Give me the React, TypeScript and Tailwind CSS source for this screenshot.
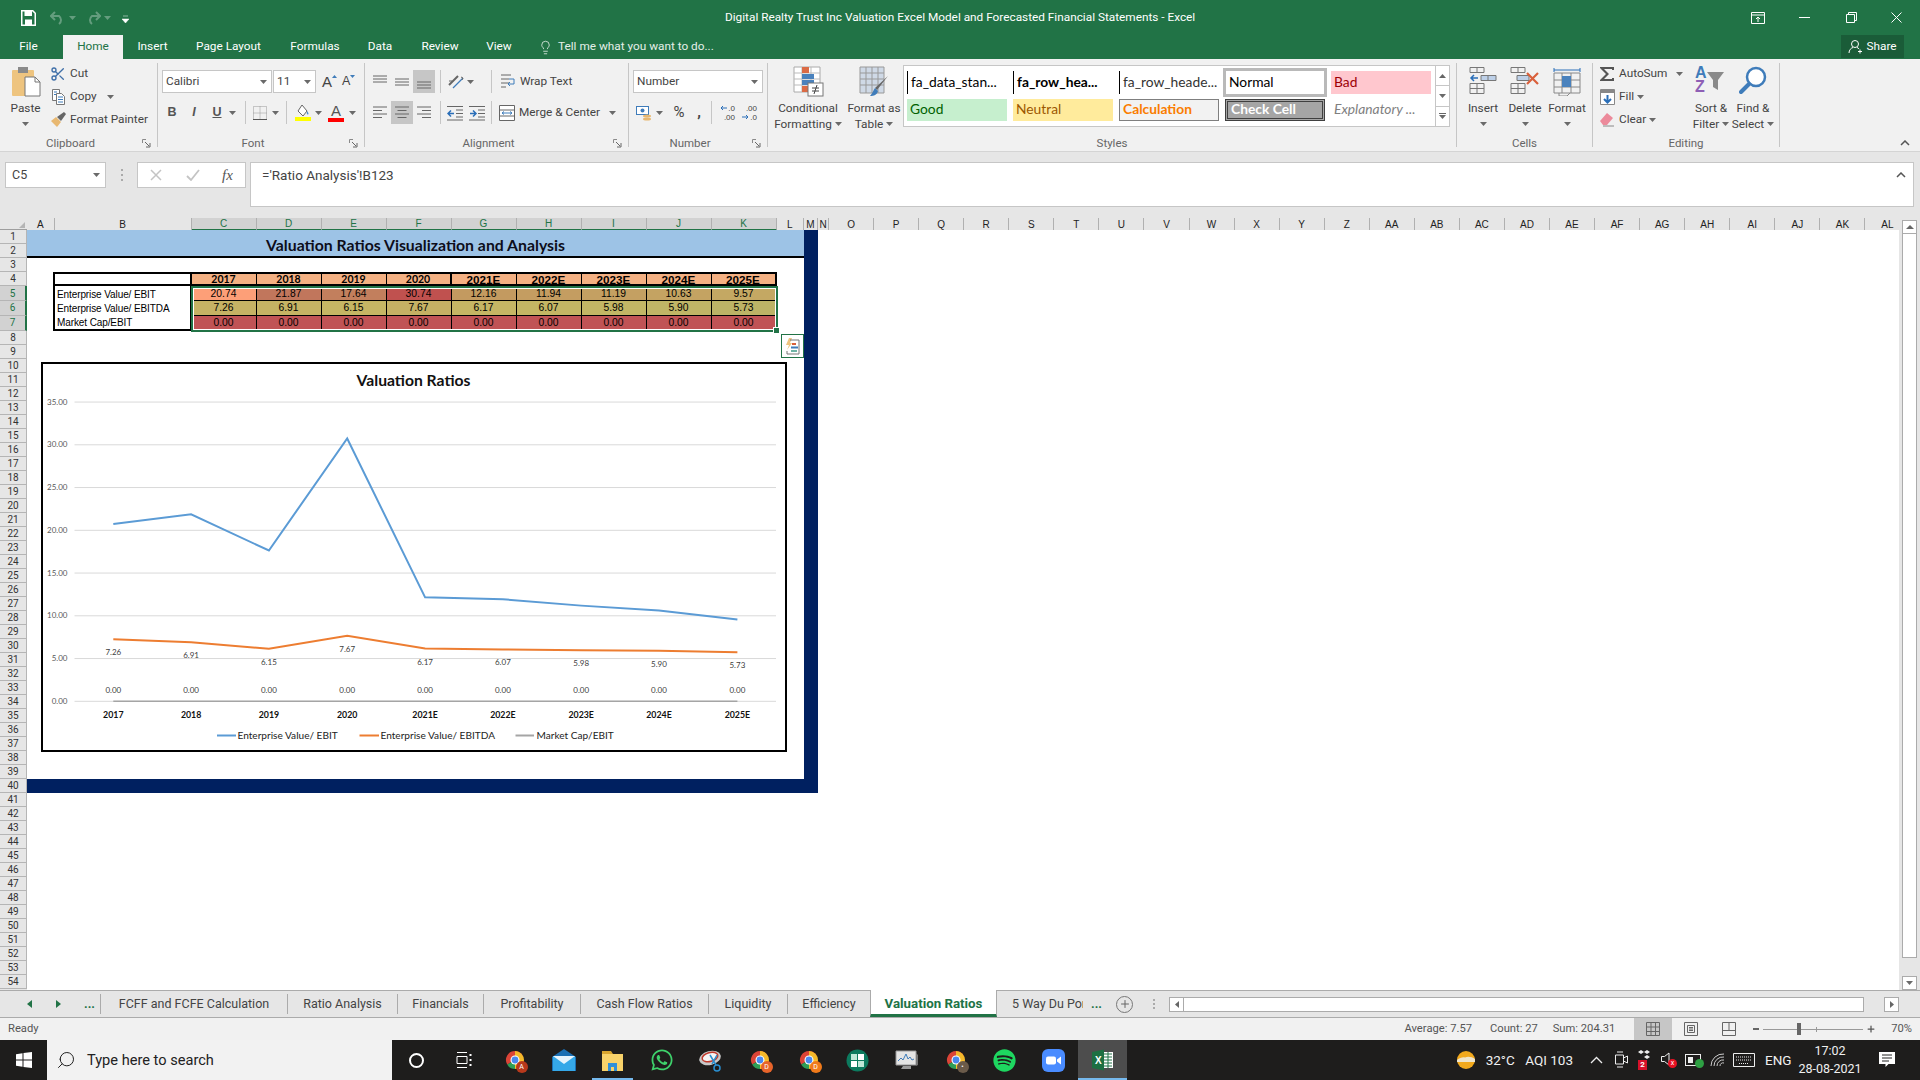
import React from 'react';
import { Scissors, Lightbulb, Search, Plus } from 'lucide-react';
import { FaWhatsapp, FaSpotify } from 'react-icons/fa';

const CELL_COLS = 'grid-cols-[27.5px_137px_repeat(9,65px)_27.5px_14px_11px_repeat(24,45.07px)]';
const CELL_ROWS = 'grid-rows-[repeat(4,14.07px)_repeat(3,14.8px)_repeat(47,14.03px)]';

const columns = ['A','B','C','D','E','F','G','H','I','J','K','L','M','N','O','P','Q','R','S','T','U','V','W','X','Y','Z','AA','AB','AC','AD','AE','AF','AG','AH','AI','AJ','AK','AL'];
const selectedCols = ['C','D','E','F','G','H','I','J','K'];
const rows = Array.from({ length: 54 }, (_, i) => i + 1);

const years = ['2017','2018','2019','2020','2021E','2022E','2023E','2024E','2025E'];
const tableRows = [
  { label: 'Enterprise Value/ EBIT', values: ['20.74','21.87','17.64','30.74','12.16','11.94','11.19','10.63','9.57'], colors: ['bg-[#fd9f78]','bg-[#c1765c]','bg-[#c27f5d]','bg-[#c0514f]','bg-[#c39a60]','bg-[#c49d61]','bg-[#c4a062]','bg-[#c4a362]','bg-[#c4a863]'] },
  { label: 'Enterprise Value/ EBITDA', values: ['7.26','6.91','6.15','7.67','6.17','6.07','5.98','5.90','5.73'], colors: ['bg-[#c5b264]','bg-[#c5b364]','bg-[#c5b664]','bg-[#c5b164]','bg-[#c5b664]','bg-[#c4b664]','bg-[#c2b665]','bg-[#c0b566]','bg-[#bcb366]'] },
  { label: 'Market Cap/EBIT', values: ['0.00','0.00','0.00','0.00','0.00','0.00','0.00','0.00','0.00'], colors: Array(9).fill('bg-[#c05355]') },
];

const chartX = [112.8, 190.6, 268.4, 346.7, 424.6, 502.4, 580.7, 658.5, 736.9];
const ebit = [20.74, 21.87, 17.64, 30.74, 12.16, 11.94, 11.19, 10.63, 9.57];
const ebitda = [7.26, 6.91, 6.15, 7.67, 6.17, 6.07, 5.98, 5.9, 5.73];
const ebitdaLabelY = [654.5, 657.5, 664.5, 651.5, 664.5, 664.5, 665.5, 666.5, 667.5];
const toY = (v: number) => 701.3 - v * 8.55;
const toPoints = (vals: number[]) => vals.map((v, i) => `${chartX[i]},${toY(v)}`).join(' ');

const Caret = ({ color = '#6a6a6a' }: { color?: string }) => (
  <svg width="7" height="4" viewBox="0 0 7 4" className="shrink-0"><path d="M0 0h7L3.5 4z" fill={color} /></svg>
);

const Lines = ({ kind }: { kind: 'top' | 'mid' | 'bot' | 'left' | 'center' | 'right' }) => {
  const d: Record<string, string> = {
    top: 'M1 2h14M1 5h14M1 8h14',
    mid: 'M1 5h14M1 8h14M1 11h14',
    bot: 'M1 8h14M1 11h14M1 14h14',
    left: 'M1 2h14M1 5.5h9M1 9h14M1 12.5h9',
    center: 'M1 2h14M3.5 5.5h9M1 9h14M3.5 12.5h9',
    right: 'M1 2h14M6 5.5h9M1 9h14M6 12.5h9',
  };
  return <svg width="16" height="16" viewBox="0 0 16 16"><path d={d[kind]} stroke="#666" strokeWidth="1" fill="none" /></svg>;
};

const Sep = ({ className = '' }: { className?: string }) => <div className={`w-px h-[23px] bg-[#c6c6c6] shrink-0 ${className}`} />;

const Launcher = () => (
  <svg width="9" height="9" viewBox="0 0 9 9" className="justify-self-end mr-[6px]"><path d="M.5 4V.5H4" stroke="#8a8a8a" fill="none" /><path d="M3 3l4 4M8 4v4H4" stroke="#666" fill="none" /></svg>
);

const Group = ({ label, width, launcher, children }: { label: string; width: string; launcher?: boolean; children: React.ReactNode }) => (
  <div className={`flex flex-col h-[84px] mt-[4px] border-r border-[#c6c6c6] shrink-0 ${width}`}>
    <div className="flex-1 flex min-h-0">{children}</div>
    <div className={`grid items-center h-[13px] text-[11.5px] leading-[13px] text-[#666] translate-y-[3px] ${launcher ? 'grid-cols-[1fr_auto_1fr_16px]' : 'grid-cols-[1fr_auto_1fr]'}`}>
      <span />
      <span>{label}</span>
      <span />
      {launcher && <Launcher />}
    </div>
  </div>
);

const BigButton = ({ icon, lines, width, caretBelow }: { icon: React.ReactNode; lines: string[]; width: string; caretBelow?: boolean }) => (
  <div className={`flex flex-col items-center shrink-0 ${width}`}>
    <div className="h-[37px] pt-[3px] flex justify-center">{icon}</div>
    {lines.map((l, i) => (
      <div key={l} className="h-[16px] leading-[16px] flex items-center gap-[3px] whitespace-nowrap">
        {l}
        {!caretBelow && i === lines.length - 1 && lines.length > 1 && <Caret />}
      </div>
    ))}
    {caretBelow && <div className="h-[16px] flex items-center"><Caret /></div>}
  </div>
);

const SmallRow = ({ icon, text, caret }: { icon: React.ReactNode; text: string; caret?: string }) => (
  <div className="h-[23px] flex items-center whitespace-nowrap">
    <div className="w-[18px] flex justify-center shrink-0">{icon}</div>
    <span className="ml-[3px]">{text}</span>
    {caret && <span className={caret}><Caret /></span>}
  </div>
);

const PasteIcon = () => (
  <svg width="30" height="31" viewBox="0 0 30 31">
    <rect x="1" y="4" width="22" height="26" rx="1" fill="#eec47f" />
    <rect x="7" y="1" width="10" height="6" fill="#8a8a8a" />
    <path d="M14 11h10l5 5v14H14z" fill="#fff" stroke="#777" />
    <path d="M24 11v5h5" fill="none" stroke="#777" />
  </svg>
);
const CopyIcon = () => (
  <svg width="15" height="16" viewBox="0 0 15 16" fill="#fff" stroke="#777">
    <path d="M1.5.5h7v11h-7z" />
    <path d="M5.5 4.5h5l3 3v8h-8z" />
    <path d="M7 8h5M7 10.5h5M7 13h5M3 3h3M3 5.5h2" stroke="#3f7cba" />
  </svg>
);
const PainterIcon = () => (
  <svg width="17" height="17" viewBox="0 0 17 17">
    <path d="M1 10l5-4 5 5-4 5z" fill="#e8b871" />
    <path d="M7 6l4 4 5-7-2-2z" fill="#666" />
  </svg>
);
const BordersIcon = () => (
  <svg width="14" height="14" viewBox="0 0 14 14"><path d="M.5.5h13v13H.5zM7 .5v13M.5 7h13" stroke="#999" strokeDasharray="1 1" fill="none" /><path d="M0 13.5h14" stroke="#555" /></svg>
);
const FillIcon = () => (
  <svg width="16" height="17" viewBox="0 0 16 17">
    <path d="M7 1l5 6-4 5-5-5z" fill="#fff" stroke="#666" />
    <path d="M12 7c1.5 2 2 3 1 3.500s-1.500-1-1-3.500z" fill="#4a90d0" />
    <rect y="13" width="16" height="4" fill="#ffff00" />
  </svg>
);
const FontColorIcon = () => (
  <div className="flex flex-col items-center w-[16px]">
    <span className="text-[15px] leading-[14px] font-['Liberation_Sans',sans-serif] text-[#555]">A</span>
    <div className="w-[16px] h-[4px] bg-[#ff0000]" />
  </div>
);
const OrientationIcon = () => (
  <svg width="18" height="18" viewBox="0 0 18 18"><path d="M2 12L11 3" stroke="#666" strokeWidth="2" /><path d="M6 15L16 5" stroke="#3f7cba" strokeWidth="1.200" /><path d="M14 4l2 1-1 2M2 8h3" stroke="#666" fill="none" /></svg>
);
const WrapIcon = () => (
  <svg width="16" height="18" viewBox="0 0 16 18"><path d="M1 2h10M1 6h8M1 10h8M1 14h5" stroke="#666" fill="none" /><path d="M9 6h5v5H8m2-2l-2 2 2 2" stroke="#3f7cba" fill="none" /></svg>
);
const MergeIcon = () => (
  <svg width="16" height="16" viewBox="0 0 16 16"><path d="M.5.500h15v15H.5zM.5 5h15M.5 11h15" stroke="#666" fill="#fff" /><path d="M3 8h10M3 8l2-1.500M3 8l2 1.500M13 8l-2-1.500M13 8l-2 1.500" stroke="#3f7cba" fill="none" /></svg>
);
const IndentIcon = ({ out }: { out?: boolean }) => (
  <svg width="16" height="16" viewBox="0 0 16 16"><path d="M0 1.500h16M9 5h7M9 8.500h7M9 12h7M0 15h16" stroke="#666" fill="none" /><path d={out ? 'M7 8.500H1m3-3l-3 3 3 3' : 'M1 8.500h6m-3-3l3 3-3 3'} stroke="#2a6eb8" strokeWidth="1.500" fill="none" /></svg>
);
const AccountingIcon = () => (
  <svg width="16" height="18" viewBox="0 0 16 18"><rect x=".5" y="2.500" width="12" height="8" fill="#fff" stroke="#3f7cba" /><circle cx="6.500" cy="6.500" r="2" fill="#3f7cba" /><ellipse cx="11" cy="12" rx="4" ry="1.500" fill="#e8b871" /><ellipse cx="11" cy="15" rx="4" ry="1.500" fill="#e8b871" /></svg>
);
const DecimalIcon = ({ more }: { more?: boolean }) => (
  <div className="w-[16px] flex flex-col text-[8px] leading-[9px] font-['Liberation_Sans',sans-serif] text-[#444] whitespace-nowrap">
    <span className="flex items-center justify-end gap-px">
      {more && <svg width="7" height="6" viewBox="0 0 7 6"><path d="M7 3H1m2-2L1 3l2 2" stroke="#2a6eb8" fill="none" /></svg>}
      {more ? '.0' : '.00'}
    </span>
    <span className="flex items-center justify-end gap-px">
      {!more && <svg width="7" height="6" viewBox="0 0 7 6"><path d="M0 3h6M4 1l2 2-2 2" stroke="#2a6eb8" fill="none" /></svg>}
      {more ? '.00' : '.0'}
    </span>
  </div>
);
const CondFormatIcon = () => (
  <svg width="31" height="31" viewBox="0 0 31 31">
    <path d="M1 1h26v25H1z" fill="#fff" stroke="#aaa" />
    <path d="M1 7h26M1 13h26M1 19h26M9 1v25M18 1v25" stroke="#bbb" />
    <rect x="9" y="1" width="7" height="6" fill="#db6b45" />
    <rect x="9" y="8" width="12" height="5" fill="#4a82bd" />
    <rect x="9" y="14" width="12" height="5" fill="#4a82bd" />
    <rect x="9" y="20" width="7" height="6" fill="#db6b45" />
    <rect x="15" y="17" width="15" height="13" fill="#fff" stroke="#777" />
    <path d="M19 22h7M19 25h7M24 19l-3 9" stroke="#444" />
  </svg>
);
const TableIcon = () => (
  <svg width="30" height="31" viewBox="0 0 30 31">
    <path d="M1 1h24v26H1z" fill="#cfd9e6" stroke="#999" />
    <path d="M1 7h24M1 13h24M1 19h24M7 1v26M13 1v26M19 1v26" stroke="#999" />
    <path d="M29 10L18 24l-2-2z" fill="#666" />
    <path d="M16 22l3 3c-1 4-4 5-8 5 2-2 3-5 5-8z" fill="#3f7cba" />
  </svg>
);
const InsertIcon = () => (
  <svg width="28" height="28" viewBox="0 0 28 28" fill="none">
    <path d="M1 1.500h14v5H1zM8 1.500v5M1 17.500h14v10H1zM1 22.500h14M8 17.500v10" stroke="#777" />
    <path d="M12 9.500h15v5H12zM19 9.500v5" fill="#bdd0e8" stroke="#777" />
    <path d="M9 12H2m3-3l-3 3 3 3" stroke="#2a6eb8" strokeWidth="1.500" />
  </svg>
);
const DeleteIcon = () => (
  <svg width="30" height="28" viewBox="0 0 30 28" fill="none">
    <path d="M1 1.500h14v5H1zM8 1.500v5M1 17.500h14v10H1zM1 22.500h14M8 17.500v10" stroke="#777" />
    <path d="M7 9.500h12v5H7z" fill="#bdd0e8" stroke="#777" />
    <path d="M17 7l11 11M28 7L17 18" stroke="#d9603b" strokeWidth="2.200" />
  </svg>
);
const FormatIcon = () => (
  <svg width="28" height="30" viewBox="0 0 28 30" fill="none">
    <path d="M1 2v4M27 2v4M1 4h26" stroke="#2a6eb8" />
    <path d="M1 7h26v20H1zM1 14h26M1 21h26M9 7v20M18 7v20" stroke="#888" />
    <rect x="9" y="10" width="9" height="11" fill="#4a82bd" />
    <path d="M6 27v3h8l3-3" stroke="#888" />
  </svg>
);
const SigmaIcon = () => (
  <svg width="16" height="16" viewBox="0 0 16 16"><path d="M1 1h14v3h-2V3H5l5 5-5 5h8v-1h2v3H1v-1l6-6-6-6z" fill="#555" /></svg>
);
const FillDownIcon = () => (
  <svg width="15" height="16" viewBox="0 0 15 16"><path d="M.500.500h14v15H.500z" fill="#fff" stroke="#888" /><rect x="1" y="1" width="13" height="3" fill="#888" /><path d="M7.500 6v7M4 10l3.500 3.500L11 10" stroke="#2a6eb8" strokeWidth="2" fill="none" /></svg>
);
const EraserIcon = () => (
  <svg width="16" height="15" viewBox="0 0 16 15"><path d="M1 9l7-8 6 5-6 7H4z" fill="#ec8a9b" /><path d="M4 14h11" stroke="#888" /></svg>
);
const SortIcon = () => (
  <div className="flex items-start w-[32px] h-[30px] font-['Liberation_Sans',sans-serif] font-bold text-[16px] leading-[14px]">
    <div className="flex flex-col">
      <span className="text-[#3f7cba]">A</span>
      <span className="text-[#8e5fb5]">Z</span>
    </div>
    <svg width="20" height="24" viewBox="0 0 20 24" className="mt-[5px] -ml-[1px]"><path d="M1 1h17l-6 8v10l-5-3V9z" fill="#8a8a8a" /></svg>
  </div>
);
const FindIcon = () => (
  <svg width="28" height="29" viewBox="0 0 28 29" fill="none"><circle cx="17" cy="11" r="9" stroke="#3f7cba" strokeWidth="2.500" fill="#fff" /><path d="M10 18L2 26" stroke="#3f7cba" strokeWidth="4" strokeLinecap="round" /></svg>
);

const StyleCell = ({ className, text }: { className: string; text: string }) => (
  <div className={`flex items-center pl-[3px] pb-px overflow-hidden whitespace-nowrap font-[Lato,sans-serif] text-[13.800px] ${className}`}>{text}</div>
);

const Ribbon = () => (
  <div className="flex h-[93px] bg-[#f1f1f1] border-b border-[#d4d4d4] text-[11.800px] text-[#444] shrink-0">
    <Group label="Clipboard" width="w-[158px]" launcher>
      <div className="w-[49px] pl-[2px] shrink-0"><BigButton icon={<PasteIcon />} lines={['Paste']} width="w-[47px]" caretBelow /></div>
      <div className="flex flex-col -mt-px">
        <SmallRow icon={<Scissors size={16} color="#3f6fa8" />} text="Cut" />
        <SmallRow icon={<CopyIcon />} text="Copy" caret="ml-[10px]" />
        <SmallRow icon={<PainterIcon />} text="Format Painter" />
      </div>
    </Group>

    <Group label="Font" width="w-[207px]" launcher>
      <div className="flex flex-col pt-[7px] pl-[4px] gap-[8px]">
        <div className="flex items-center h-[23px]">
          <div className="w-[110px] h-[23px] bg-white border border-[#c6c6c6] flex items-center justify-between pl-[3px] pr-[4px]">Calibri<Caret /></div>
          <div className="w-[43px] ml-px h-[23px] bg-white border border-[#c6c6c6] flex items-center justify-between pl-[3px] pr-[4px]">11<Caret /></div>
          <span className="ml-[6px] flex items-start font-['Liberation_Sans',sans-serif]">
            <span className="text-[15px] leading-[15px]">A</span>
            <svg width="5" height="3" viewBox="0 0 5 3" className="mt-px"><path d="M0 3h5L2.500 0z" fill="#3f7cba" /></svg>
          </span>
          <span className="ml-[5px] flex items-start font-['Liberation_Sans',sans-serif]">
            <span className="text-[12.500px] leading-[15px]">A</span>
            <svg width="5" height="3" viewBox="0 0 5 3" className="mt-px"><path d="M0 0h5L2.500 3z" fill="#3f7cba" /></svg>
          </span>
        </div>
        <div className="flex items-center h-[23px] font-['Liberation_Sans',sans-serif] text-[12.500px] text-[#555]">
          <span className="w-[20px] text-center font-bold">B</span>
          <span className="w-[20px] ml-[2px] text-center italic font-bold">I</span>
          <span className="w-[20px] ml-[3px] text-center font-bold underline">U</span>
          <span className="ml-[2px]"><Caret /></span>
          <Sep className="ml-[9px]" />
          <span className="ml-[7px]"><BordersIcon /></span>
          <span className="ml-[5px]"><Caret /></span>
          <Sep className="ml-[7px]" />
          <span className="ml-[8px]"><FillIcon /></span>
          <span className="ml-[4px]"><Caret /></span>
          <span className="ml-[6px]"><FontColorIcon /></span>
          <span className="ml-[5px]"><Caret /></span>
        </div>
      </div>
    </Group>

    <Group label="Alignment" width="w-[264px]" launcher>
      <div className="flex flex-col pt-[7px] pl-[4px] gap-[8px]">
        <div className="flex items-center h-[23px]">
          <div className="w-[22px] flex justify-center"><Lines kind="top" /></div>
          <div className="w-[22px] flex justify-center"><Lines kind="mid" /></div>
          <div className="w-[22px] h-[23px] bg-[#c6c6c6] flex items-center justify-center"><Lines kind="bot" /></div>
          <Sep className="ml-[5px]" />
          <span className="ml-[6px]"><OrientationIcon /></span>
          <span className="ml-[2px]"><Caret /></span>
          <Sep className="ml-[17px]" />
          <span className="ml-[8px] w-[16px]"><WrapIcon /></span>
          <span className="ml-[4px]">Wrap Text</span>
        </div>
        <div className="flex items-center h-[23px]">
          <div className="w-[22px] flex justify-center"><Lines kind="left" /></div>
          <div className="w-[22px] h-[23px] bg-[#c6c6c6] flex items-center justify-center"><Lines kind="center" /></div>
          <div className="w-[22px] flex justify-center"><Lines kind="right" /></div>
          <Sep className="ml-[5px]" />
          <span className="ml-[6px]"><IndentIcon out /></span>
          <span className="ml-[6px]"><IndentIcon /></span>
          <Sep className="ml-[6px]" />
          <span className="ml-[7px] w-[16px]"><MergeIcon /></span>
          <span className="ml-[4px]">Merge &amp; Center</span>
          <span className="ml-[9px]"><Caret /></span>
        </div>
      </div>
    </Group>

    <Group label="Number" width="w-[139px]" launcher>
      <div className="flex flex-col pt-[7px] pl-[4px] gap-[8px]">
        <div className="w-[130px] h-[23px] bg-white border border-[#c6c6c6] flex items-center justify-between pl-[3px] pr-[4px]">Number<Caret /></div>
        <div className="flex items-center h-[23px]">
          <span className="ml-[3px]"><AccountingIcon /></span>
          <span className="ml-[4px]"><Caret /></span>
          <span className="ml-[9px] w-[14px] text-[15px] text-center">%</span>
          <span className="ml-[9px] w-[8px] text-[15px] font-bold text-center">,</span>
          <Sep className="ml-[8px]" />
          <span className="ml-[7px]"><DecimalIcon more /></span>
          <span className="ml-[6px]"><DecimalIcon /></span>
        </div>
      </div>
    </Group>

    <Group label="Styles" width="w-[689px]">
      <div className="w-[3px] shrink-0" />
      <BigButton icon={<CondFormatIcon />} lines={['Conditional', 'Formatting']} width="w-[74px]" />
      <BigButton icon={<TableIcon />} lines={['Format as', 'Table']} width="w-[58px]" />
      <div className="flex mt-[2px] h-[62px] w-[547px] bg-white border border-[#c6c6c6] shrink-0">
        <div className="grid grid-cols-[repeat(5,100px)] grid-rows-[23px_22px] gap-x-[6px] gap-y-[5px] pl-[3px] pt-[5px] overflow-hidden w-[531px] shrink-0">
          <StyleCell className="border-l border-black text-black" text="fa_data_stan..." />
          <StyleCell className="border-l border-black font-bold text-black" text="fa_row_hea..." />
          <StyleCell className="border-l border-black text-[#333]" text="fa_row_heade..." />
          <StyleCell className="-mx-[2px] -my-[3px] border-[3px] border-[#b9b9b9] text-black" text="Normal" />
          <StyleCell className="bg-[#ffc7ce] text-[#9c0006]" text="Bad" />
          <StyleCell className="bg-[#c6efce] text-[#006100]" text="Good" />
          <StyleCell className="bg-[#ffeb9c] text-[#9c5700]" text="Neutral" />
          <StyleCell className="bg-[#f2f2f2] border border-[#7f7f7f] font-bold text-[#fa7d00]" text="Calculation" />
          <StyleCell className="bg-[#a5a5a5] border-[3px] border-double border-[#3f3f3f] font-bold text-white" text="Check Cell" />
          <StyleCell className="italic text-[#7f7f7f]" text="Explanatory ..." />
        </div>
        <div className="flex-1 flex flex-col border-l border-[#c6c6c6]">
          <div className="flex-1 flex items-center justify-center border-b border-[#c6c6c6]"><svg width="7" height="4" viewBox="0 0 7 4"><path d="M0 4h7L3.500 0z" fill="#666" /></svg></div>
          <div className="flex-1 flex items-center justify-center border-b border-[#c6c6c6]"><Caret /></div>
          <div className="flex-1 flex flex-col gap-px items-center justify-center"><div className="w-[7px] h-px bg-[#666]" /><Caret /></div>
        </div>
      </div>
    </Group>

    <Group label="Cells" width="w-[136px]">
      <div className="w-[5px] shrink-0" />
      <BigButton icon={<InsertIcon />} lines={['Insert']} width="w-[42px]" caretBelow />
      <BigButton icon={<DeleteIcon />} lines={['Delete']} width="w-[42px]" caretBelow />
      <BigButton icon={<FormatIcon />} lines={['Format']} width="w-[42px]" caretBelow />
    </Group>

    <Group label="Editing" width="w-[187px]">
      <div className="flex flex-col w-[97px] pl-[5px] -mt-px shrink-0">
        <SmallRow icon={<SigmaIcon />} text="AutoSum" caret="ml-[9px]" />
        <SmallRow icon={<FillDownIcon />} text="Fill" caret="ml-[3px]" />
        <SmallRow icon={<EraserIcon />} text="Clear" caret="ml-[3px]" />
      </div>
      <BigButton icon={<SortIcon />} lines={['Sort &', 'Filter']} width="w-[42px]" />
      <BigButton icon={<FindIcon />} lines={['Find &', 'Select']} width="w-[42px]" />
    </Group>

    <div className="flex-1 flex items-end justify-end pr-[10px] pb-[5px]">
      <svg width="10" height="6" viewBox="0 0 10 6"><path d="M1 5l4-4 4 4" stroke="#555" strokeWidth="1.500" fill="none" /></svg>
    </div>
  </div>
);

const TitleBar = () => (
  <div className="h-[59px] bg-[#217346] text-white shrink-0 flex flex-col">
    <div className="h-[35px] flex items-center">
      <div className="flex items-center w-[725px] pl-[21px] shrink-0">
        <svg width="15" height="16" viewBox="0 0 15 16"><path d="M.750.750h11l2.500 2.500v12H.750z" fill="none" stroke="#fff" strokeWidth="1.500" /><rect x="3.500" y="1" width="7.500" height="5" fill="#fff" /><rect x="4" y="9.500" width="7" height="5.500" fill="#fff" /></svg>
        <svg width="16" height="14" viewBox="0 0 16 14" className="ml-[14px]" opacity="0.3"><path d="M5 1L1 5l4 4M1 5h8a5 5 0 010 8" stroke="#fff" strokeWidth="2" fill="none" /></svg>
        <span className="ml-[3px] opacity-30"><Caret color="#fff" /></span>
        <svg width="16" height="14" viewBox="0 0 16 14" className="ml-[9px]" opacity="0.3"><path d="M11 1l4 4-4 4M15 5H7a5 5 0 000 8" stroke="#fff" strokeWidth="2" fill="none" /></svg>
        <span className="ml-[3px] opacity-30"><Caret color="#fff" /></span>
        <svg width="7" height="8" viewBox="0 0 7 8" className="ml-[11px] mt-[3px]"><path d="M1 1h5M0 4h7L3.500 8z" stroke="#fff" strokeWidth=".5" fill="#fff" /></svg>
      </div>
      <span className="text-[11.800px] whitespace-nowrap">Digital Realty Trust Inc Valuation Excel Model and Forecasted Financial Statements - Excel</span>
      <div className="ml-auto flex items-center shrink-0">
        <svg width="14" height="12" viewBox="0 0 14 12" className="mr-[34px]"><path d="M.500.500h13v11H.500zM.500 3h13" stroke="#fff" fill="none" /><path d="M7 10V5M5 7l2-2 2 2" stroke="#fff" fill="none" /></svg>
        <div className="w-[11px] h-px bg-white mr-[36px]" />
        <svg width="11" height="11" viewBox="0 0 11 11" className="mr-[34px]"><path d="M.500 2.500h8v8h-8zM2.500 2.500v-2h8v8h-2" stroke="#fff" fill="none" /></svg>
        <svg width="11" height="11" viewBox="0 0 11 11" className="mr-[18px]"><path d="M.500.500l10 10M10.500.500l-10 10" stroke="#fff" /></svg>
      </div>
    </div>
    <div className="h-[24px] flex text-[11.800px]">
      {[['File','w-[63px] pr-[6px]'],['Home','w-[60px]'],['Insert','w-[59px]'],['Page Layout','w-[93px]'],['Formulas','w-[80px]'],['Data','w-[50px]'],['Review','w-[70px]'],['View','w-[48px]']].map(([t, w]) => (
        <div key={t} className={`${w} flex items-center justify-center ${t === 'Home' ? 'bg-[#f1f1f1] text-[#217346]' : ''}`}>{t}</div>
      ))}
      <div className="flex items-center ml-[15px] text-[#e4efe8]">
        <Lightbulb size={15} strokeWidth={1.300} />
        <span className="ml-[5px]">Tell me what you want to do...</span>
      </div>
      <div className="ml-auto mr-[16px] w-[63px] h-[23px] bg-[#1a5c38] flex items-center justify-center gap-[3px]">
        <svg width="15" height="15" viewBox="0 0 15 15" fill="none" stroke="#fff"><circle cx="7" cy="5" r="3.500" /><path d="M1 14c0-3 2-5 4-5.500M9 8.500c1 .3 1.500.7 2 1.500M10 12.500h4M12 10.500v4" /></svg>
        Share
      </div>
    </div>
  </div>
);

const FormulaBar = () => (
  <div className="h-[66px] bg-[#e6e6e6] flex items-start pt-[10px] pl-[5px] text-[13.500px] text-[#444] shrink-0">
    <div className="w-[101px] h-[26px] bg-white border border-[#c6c6c6] flex items-center justify-between pl-[6px] pr-[5px] text-[12.500px]">C5<Caret /></div>
    <div className="w-[31px] h-[26px] flex flex-col gap-[3px] items-center justify-center">
      <span className="w-[2px] h-[2px] bg-[#aaa]" /><span className="w-[2px] h-[2px] bg-[#aaa]" /><span className="w-[2px] h-[2px] bg-[#aaa]" />
    </div>
    <div className="w-[109px] h-[26px] bg-white border border-[#c6c6c6] flex items-center pl-[12px]">
      <svg width="12" height="12" viewBox="0 0 12 12"><path d="M1 1l10 10M11 1L1 11" stroke="#c4c4c4" strokeWidth="1.500" /></svg>
      <svg width="14" height="12" viewBox="0 0 14 12" className="ml-[24px]"><path d="M1 7l4 4 8-10" stroke="#c4c4c4" strokeWidth="1.800" fill="none" /></svg>
      <span className="ml-[22px] font-['Liberation_Serif',serif] italic text-[15px] text-[#555]">fx</span>
    </div>
    <div className="ml-[4px] w-[1664px] h-[45px] bg-white border border-[#c6c6c6] flex justify-between pl-[11px] pr-[7px] pt-[2px]">
      ='Ratio Analysis'!B123
      <svg width="10" height="6" viewBox="0 0 10 6" className="mt-[7px]"><path d="M1 5l4-4 4 4" stroke="#555" strokeWidth="1.500" fill="none" /></svg>
    </div>
  </div>
);

const ValuationChart = () => (
  <div className="absolute left-[13.500px] top-[132px] w-[746px] h-[390px] border-2 border-black bg-white font-[Lato,sans-serif]">
    <svg width="742" height="386" viewBox="42.500 364 742 386">
      <text x="413" y="386" textAnchor="middle" fontSize="15.700" fontWeight="700" fill="#111">Valuation Ratios</text>
      {[0, 5, 10, 15, 20, 25, 30, 35].map((v) => (
        <g key={v}>
          <line x1="74" x2="775.500" y1={toY(v)} y2={toY(v)} stroke="#d9d9d9" strokeWidth="1" />
          <text x="67" y={toY(v) + 2.500} textAnchor="end" fontSize="8" fill="#595959">{v.toFixed(2)}</text>
        </g>
      ))}
      <line x1={chartX[0]} x2={chartX[8]} y1={701.3} y2={701.3} stroke="#a5a5a5" strokeWidth="1.500" />
      <polyline points={toPoints(ebit)} fill="none" stroke="#5b9bd5" strokeWidth="2" />
      <polyline points={toPoints(ebitda)} fill="none" stroke="#ed7d31" strokeWidth="2" />
      {chartX.map((x, i) => (
        <g key={x} textAnchor="middle">
          <text x={x} y={ebitdaLabelY[i]} fontSize="8" fill="#404040">{ebitda[i].toFixed(2)}</text>
          <text x={x} y={693} fontSize="8" fill="#404040">0.00</text>
          <text x={x} y={717.500} fontSize="8.800" fontWeight="700" fill="#111">{years[i]}</text>
        </g>
      ))}
      <line x1="216.500" x2="235.500" y1="735.500" y2="735.500" stroke="#5b9bd5" strokeWidth="2" />
      <text x="237" y="739" fontSize="10.100" fill="#222">Enterprise Value/ EBIT</text>
      <line x1="359" x2="378.500" y1="735.500" y2="735.500" stroke="#ed7d31" strokeWidth="2" />
      <text x="380" y="739" fontSize="10.100" fill="#222">Enterprise Value/ EBITDA</text>
      <line x1="515" x2="533.500" y1="735.500" y2="735.500" stroke="#a5a5a5" strokeWidth="2" />
      <text x="536" y="739" fontSize="10.100" fill="#222">Market Cap/EBIT</text>
    </svg>
  </div>
);

const SheetTable = () => (
  <div className="col-[2/12] row-[4/8] grid grid-cols-[137px_repeat(9,65px)] grid-rows-[14.07px_repeat(3,14.8px)] text-black font-['Liberation_Sans',sans-serif]">
    <div className="-ml-[1.500px] border-2 border-black bg-white" />
    {years.map((y) => (
      <div key={y} className={`bg-[#f4b183] border-y-2 border-r border-black flex items-center justify-center pt-px font-bold ${y.endsWith('E') ? 'text-[11.700px]' : "text-[10.500px] font-[Lato,sans-serif]"} ${y === '2020' || y === '2025E' ? 'border-r-2' : ''}`}>{y}</div>
    ))}
    {tableRows.map((row, r) => (
      <React.Fragment key={row.label}>
        <div className={`-ml-[1.500px] border-l-2 border-r-2 border-black bg-white flex items-center pl-[2px] pt-px text-[10px] whitespace-nowrap tracking-[-0.1px] ${r === 2 ? 'border-b-2' : ''}`}>{row.label}</div>
        {row.values.map((v, c) => (
          <div key={c} className={`${row.colors[c]} border-r border-b border-black flex items-center justify-center pt-px text-[10.300px] leading-none`}>{v}</div>
        ))}
      </React.Fragment>
    ))}
  </div>
);

const Sheet = () => (
  <div className="flex flex-1 min-h-0">
    <div className="w-[1899px] overflow-hidden flex flex-col shrink-0">
      <div className="flex h-[12px] bg-[#e6e6e6] font-['Liberation_Sans',sans-serif] text-[10px] text-[#222] shrink-0">
        <div className="w-[27px] shrink-0 flex items-end justify-end pr-[2px] pb-[1px] border-b border-[#9e9e9e]">
          <svg width="6" height="6" viewBox="0 0 6 6"><path d="M6 0v6H0z" fill="#b5b5b5" /></svg>
        </div>
        <div className={`grid ${CELL_COLS} shrink-0`}>
          {columns.map((c) => {
            const sel = selectedCols.includes(c);
            return (
              <div key={c} className={`flex items-center justify-center pt-px leading-none border-r ${sel ? 'bg-[#d2d2d2] text-[#217346] border-r-[#b0b0b0] border-b-2 border-b-[#217346]' : 'border-r-[#b0b0b0] border-b border-b-[#9e9e9e]'}`}>{c}</div>
            );
          })}
        </div>
      </div>
      <div className="flex flex-1 min-h-0">
        <div className={`w-[27px] grid ${CELL_ROWS} bg-[#e6e6e6] text-[10px] text-[#333] shrink-0 font-[Roboto,sans-serif]`}>
          {rows.map((r) => (
            <div key={r} className={`flex items-center justify-center pt-px leading-none border-b border-[#b5b5b5] ${r >= 5 && r <= 7 ? 'bg-[#d2d2d2] text-[#217346] border-r-2 border-r-[#217346]' : 'border-r border-r-[#b5b5b5]'}`}>{r}</div>
          ))}
        </div>
        <div className={`relative grid ${CELL_COLS} ${CELL_ROWS} bg-white shrink-0`}>
          <div className="col-[1/13] row-[1/3] bg-[#9dc3e6] border-b-2 border-black flex items-center justify-center pt-[4px] font-[Lato,sans-serif] font-bold text-[15.800px] text-[#0d0d1a]">Valuation Ratios Visualization and Analysis</div>
          <div className="col-[13/14] row-[1/41] bg-[#002060]" />
          <div className="col-[1/14] row-[40/41] bg-[#002060]" />
          <SheetTable />
          <div className="col-[3/12] row-[5/8] relative border-2 border-[#217346] -mx-px -mb-px">
            <div className="w-full h-full border border-white" />
            <div className="absolute -right-[4px] -bottom-[4px] w-[7px] h-[7px] bg-[#217346] border border-white" />
          </div>
          <div className="absolute left-[754px] top-[104px] w-[23px] h-[24px] bg-white border border-[#217346] flex items-center justify-center">
            <svg width="15" height="17" viewBox="0 0 15 17"><path d="M4 0L1 7h3L2 12l5-7H5l2-5z" fill="#eec47f" /><path d="M5 2h9v14H2v-3" stroke="#777" fill="none" /><rect x="7" y="5" width="4" height="2" fill="#d9603b" /><rect x="6" y="8.500" width="7" height="2" fill="#3f7cba" /><rect x="6" y="12" width="6" height="2" fill="#6fb3a5" /></svg>
          </div>
          <ValuationChart />
        </div>
      </div>
    </div>
    <div className="flex-1 bg-[#e6e6e6] flex flex-col pt-[2px] pl-[3px] pr-[3px]">
      <div className="h-[14px] bg-white border border-[#ababab] flex items-center justify-center"><svg width="8" height="4" viewBox="0 0 8 4"><path d="M0 4h8L4 0z" fill="#666" /></svg></div>
      <div className="h-[724px] bg-white border-x border-b border-[#ababab]" />
      <div className="mt-auto h-[14px] bg-white border border-[#ababab] flex items-center justify-center"><Caret /></div>
    </div>
  </div>
);

const sheetTabs = [
  ['FCFF and FCFE Calculation', 'w-[187px]'],
  ['Ratio Analysis', 'w-[110px]'],
  ['Financials', 'w-[86px]'],
  ['Profitability', 'w-[97px]'],
  ['Cash Flow Ratios', 'w-[128px]'],
  ['Liquidity', 'w-[79px]'],
  ['Efficiency', 'w-[83px]'],
];

const SheetTabs = () => (
  <div className="h-[28px] bg-[#e6e6e6] border-y border-[#ababab] flex items-center text-[12.500px] text-[#444] shrink-0">
    <div className="w-[100px] flex items-center text-[#217346] shrink-0">
      <svg width="5" height="8" viewBox="0 0 5 8" className="ml-[27px]"><path d="M5 0v8L0 4z" fill="#217346" /></svg>
      <svg width="5" height="8" viewBox="0 0 5 8" className="ml-[24px]"><path d="M0 0v8l5-4z" fill="#217346" /></svg>
      <span className="ml-[23px] font-bold">...</span>
    </div>
    {sheetTabs.map(([t, w]) => (
      <div key={t} className={`${w} h-[20px] border-l border-[#ababab] flex items-center justify-center whitespace-nowrap shrink-0`}>{t}</div>
    ))}
    <div className="w-[127px] h-[27px] -mt-px pt-[3px] bg-white border-x border-[#ababab] border-b-[3px] border-b-[#217346] flex items-center justify-center font-bold text-[13.300px] text-[#217346] shrink-0">Valuation Ratios</div>
    <div className="w-[71px] ml-[15px] overflow-hidden whitespace-nowrap shrink-0">5 Way Du Pont</div>
    <span className="ml-[8px] w-[10px] text-[#217346] font-bold">...</span>
    <div className="ml-[15px] w-[17px] h-[17px] rounded-full border border-[#777] flex items-center justify-center"><Plus size={12} color="#666" /></div>
    <div className="ml-[20px] flex flex-col gap-[2px]">
      <span className="w-[2px] h-[2px] bg-[#aaa]" /><span className="w-[2px] h-[2px] bg-[#aaa]" /><span className="w-[2px] h-[2px] bg-[#aaa]" />
    </div>
    <div className="ml-[14px] flex items-center h-[15px] w-[730px] shrink-0">
      <div className="w-[15px] h-[15px] bg-white border border-[#ababab] flex items-center justify-center shrink-0"><svg width="4" height="7" viewBox="0 0 4 7"><path d="M4 0v7L0 3.500z" fill="#666" /></svg></div>
      <div className="flex-1 h-[15px] bg-white border-y border-r border-[#ababab]" />
      <div className="w-[20px] h-[15px] shrink-0" />
      <div className="w-[15px] h-[15px] bg-white border border-[#ababab] flex items-center justify-center shrink-0"><svg width="4" height="7" viewBox="0 0 4 7"><path d="M0 0v7l4-3.500z" fill="#666" /></svg></div>
    </div>
  </div>
);

const StatusBar = () => (
  <div className="h-[22px] bg-[#f1f1f1] flex items-center text-[11.200px] text-[#555] shrink-0 pl-[8px]">
    <span>Ready</span>
    <div className="ml-auto flex items-center h-full">
      <span>Average: 7.57</span>
      <span className="ml-[18px]">Count: 27</span>
      <span className="ml-[15px]">Sum: 204.31</span>
      <div className="ml-[19px] w-[38px] h-full bg-[#c6c6c6] flex items-center justify-center">
        <svg width="14" height="14" viewBox="0 0 14 14"><path d="M.500.500h13v13H.500zM.500 5h13M.500 9.500h13M5 .500v13M9.500 .500v13" stroke="#666" fill="none" /></svg>
      </div>
      <svg width="14" height="14" viewBox="0 0 14 14" className="ml-[12px]"><path d="M.500.500h13v13H.500z" stroke="#666" fill="none" /><path d="M3.500 3.500h7v7h-7zM5 5.500h4M5 7h4M5 8.500h4" stroke="#666" fill="none" /></svg>
      <svg width="14" height="14" viewBox="0 0 14 14" className="ml-[24px]"><path d="M.500.500h13v13H.500zM.500 8.500h13M7 .500v8" stroke="#666" fill="none" /></svg>
      <div className="ml-[17px] w-[6px] h-[2px] bg-[#666]" />
      <div className="ml-[4px] w-[100px] flex items-center h-[12px] shrink-0">
        <div className="w-[34px] h-px bg-[#999]" />
        <div className="w-[4px] h-[12px] bg-[#666]" />
        <div className="w-[15px] h-px bg-[#999]" />
        <div className="w-px h-[5px] bg-[#999]" />
        <div className="flex-1 h-px bg-[#999]" />
      </div>
      <Plus size={10} color="#555" strokeWidth={3} className="ml-[3px]" />
      <span className="ml-[15px] mr-[8px]">70%</span>
    </div>
  </div>
);

const Chrome = ({ badge, badgeColor }: { badge?: string; badgeColor?: string }) => (
  <div className="relative w-[22px] h-[22px]">
    <svg width="22" height="22" viewBox="0 0 22 22">
      <path d="M11 11L3.200 15.500A9 9 0 0 1 11 2h0a9 9 0 0 1 7.800 4.500z" fill="#db4437" />
      <path d="M11 11H20A9 9 0 0 1 11 20z" fill="#fbc02d" />
      <path d="M11 11v9A9 9 0 0 1 3.200 15.500z" fill="#2e9e57" />
      <path d="M11 2a9 9 0 0 1 9 9h-9z" fill="#f3b92a" />
      <circle cx="11" cy="11" r="4.500" fill="#fff" />
      <circle cx="11" cy="11" r="3.400" fill="#4a88ee" />
    </svg>
    {badge && <div className={`absolute -right-[2px] -bottom-[2px] w-[12px] h-[12px] rounded-full ${badgeColor} text-white text-[7px] leading-[12px] text-center`}>{badge}</div>}
  </div>
);

const TaskSlot = ({ children, active, underline }: { children: React.ReactNode; active?: boolean; underline?: boolean }) => (
  <div className={`relative w-[49px] h-full flex items-center justify-center shrink-0 ${active ? 'bg-[#4d4d4d]' : ''}`}>
    {children}
    {(active || underline) && <div className={`absolute bottom-0 h-[2px] bg-[#76b9ed] ${active ? 'inset-x-0' : 'inset-x-[4px]'}`} />}
  </div>
);

const Taskbar = () => (
  <div className="h-[40px] bg-[#1e1d1c] flex items-center text-white shrink-0">
    <div className="w-[47px] flex justify-center shrink-0">
      <svg width="16" height="16" viewBox="0 0 16 16" fill="#fff"><path d="M0 2.200L6.500 1.300V7.500H0zM7.500 1.100L16 0V7.500H7.500zM0 8.500H6.500V14.700L0 13.800zM7.500 8.500H16V16L7.500 14.900z" /></svg>
    </div>
    <div className="w-[345px] h-full bg-[#f2f2f2] flex items-center text-[#222] text-[14.600px] shrink-0">
      <Search size={20} strokeWidth={1.200} className="ml-[9px] -scale-x-100" />
      <span className="ml-[11px] pt-px">Type here to search</span>
    </div>
    <div className="w-[48px] flex justify-center shrink-0"><div className="w-[15px] h-[15px] rounded-full border-2 border-white" /></div>
    <div className="w-[48px] flex justify-center shrink-0">
      <svg width="16" height="16" viewBox="0 0 16 16" fill="none" stroke="#fff"><path d="M1 .500h10M1 15.500h10M1 4.500h10v7H1z" /><path d="M14.500 2v2M14.500 7v2M14.500 12v2" strokeWidth="2" /></svg>
    </div>
    <div className="w-[2px] shrink-0" />
    <TaskSlot><Chrome badge="A" badgeColor="bg-[#b8391c]" /></TaskSlot>
    <TaskSlot>
      <svg width="24" height="24" viewBox="0 0 24 24"><path d="M12 1l12 8v14H0V9z" fill="#1b6fb3" /><path d="M1 8h22v15H1z" fill="#35a8e8" /><path d="M1 8l11 8 11-8z" fill="#e7f4fc" /></svg>
    </TaskSlot>
    <TaskSlot underline>
      <svg width="23" height="23" viewBox="0 0 23 23"><path d="M1 2h9l2 3H1z" fill="#d9a52f" /><rect x="1" y="5" width="21" height="17" fill="#f8d26a" /><rect x="7" y="14" width="9" height="8" fill="#2f8fd8" /><rect x="10" y="18" width="3" height="4" fill="#f8d26a" /></svg>
    </TaskSlot>
    <TaskSlot><FaWhatsapp size={24} color="#3ed16b" /></TaskSlot>
    <TaskSlot>
      <svg width="26" height="26" viewBox="0 0 26 26"><ellipse cx="12" cy="11" rx="11" ry="7" fill="#c8c8c8" transform="rotate(-15 12 11)" /><ellipse cx="12" cy="10" rx="8" ry="4.500" fill="#f5f5f5" stroke="#c0392b" strokeWidth="1.500" transform="rotate(-15 12 10)" /><path d="M12 8l6 10M19 8l-5 9" stroke="#2a8fd0" strokeWidth="1.500" /><circle cx="19" cy="21" r="3" fill="none" stroke="#2a8fd0" strokeWidth="1.500" /></svg>
    </TaskSlot>
    <TaskSlot><Chrome badge="D" badgeColor="bg-[#e8642a]" /></TaskSlot>
    <TaskSlot><Chrome badge="D" badgeColor="bg-[#f07a1a]" /></TaskSlot>
    <TaskSlot>
      <svg width="23" height="23" viewBox="0 0 23 23"><circle cx="11.500" cy="11.500" r="11" fill="#0c7a5e" /><rect x="5" y="5" width="6" height="6" fill="#bfe8d8" /><rect x="12" y="5" width="6" height="6" fill="#fff" /><rect x="5" y="12" width="6" height="6" fill="#fff" /><rect x="12" y="12" width="6" height="6" fill="#bfe8d8" /></svg>
    </TaskSlot>
    <TaskSlot>
      <svg width="24" height="24" viewBox="0 0 24 24"><path d="M1 3h20v14H1z" fill="#e4e4e4" stroke="#999" /><path d="M3 13l3-3 2 2 3-6 2 5 2-2 2 3 2-1" stroke="#3f7cba" fill="none" /><path d="M8 18h8v3H6z" fill="#9a9a9a" /><path d="M21 5l2 2v10l-2 1z" fill="#777" /></svg>
    </TaskSlot>
    <TaskSlot><Chrome badge="•" badgeColor="bg-[#6b5b4a]" /></TaskSlot>
    <TaskSlot><FaSpotify size={23} color="#1ed760" /></TaskSlot>
    <TaskSlot>
      <svg width="23" height="23" viewBox="0 0 23 23"><rect width="23" height="23" rx="6" fill="#4a8cff" /><rect x="4" y="7.500" width="10" height="8" rx="2" fill="#fff" /><path d="M15 10.500l4-3v8l-4-3z" fill="#fff" /></svg>
    </TaskSlot>
    <TaskSlot active>
      <svg width="22" height="22" viewBox="0 0 22 22"><path d="M10 3h11v16H10z" fill="#fff" /><path d="M12 5h8M12 8h8M12 11h8M12 14h8M12 17h8M16 3v16" stroke="#217346" /><path d="M0 3l12-2.500v21L0 19z" fill="#1d6f42" /><text x="3" y="15" fontSize="10" fontWeight="700" fill="#fff" fontFamily="Liberation Sans">X</text></svg>
    </TaskSlot>

    <div className="ml-auto flex items-center h-full shrink-0 text-[13.500px] text-[#f0f0f0]">
      <svg width="20" height="22" viewBox="0 0 20 22"><circle cx="10" cy="11" r="9" fill="#f2a91c" /><path d="M1 11c3-2 5-3 8-2.500 3-1.500 7-.5 10 1.500v3H1z" fill="#efe5cc" /></svg>
      <span className="ml-[10px]">32°C</span>
      <span className="ml-[10.500px]">AQI 103</span>
      <svg width="13" height="8" viewBox="0 0 13 8" className="ml-[17px]"><path d="M1 7l5.500-5.500L12 7" stroke="#eee" strokeWidth="1.300" fill="none" /></svg>
      <svg width="13" height="18" viewBox="0 0 13 18" className="ml-[12px]" fill="none" stroke="#eee"><path d="M.500 4h8v9h-8zM8.500 7l4-2v7l-4-2M2 1h6M2 16h6" /></svg>
      <div className="ml-[10px] relative w-[16px] h-[20px]">
        <svg width="16" height="10" viewBox="0 0 16 10" fill="#eee"><path d="M0 2l3-2 3 2-3 2zM6 2l3-2 3 2-3 2zM6 7l3-2 3 2-3 2z" /></svg>
        <div className="absolute left-0 bottom-0 w-[9px] h-[10px] bg-[#d8112a] text-white text-[8px] leading-[10px] text-center font-bold">2</div>
      </div>
      <div className="ml-[7px] relative w-[16px] h-[16px]">
        <svg width="9" height="14" viewBox="0 0 9 14" fill="none" stroke="#eee"><path d="M.500 4.500h3L8 1v12L3.500 9.500h-3z" /></svg>
        <div className="absolute right-0 bottom-0 w-[9px] h-[9px] rounded-full bg-[#e81123] text-white text-[7px] leading-[9px] text-center">x</div>
      </div>
      <div className="ml-[8px] relative w-[16px] h-[12px] border border-[#eee] p-[2px]">
        <div className="w-[5px] h-full bg-[#eee]" />
        <div className="absolute -right-[4px] -bottom-[3px] w-[9px] h-[9px] rounded-full bg-[#2ea043]" />
      </div>
      <svg width="16" height="14" viewBox="0 0 16 14" fill="none" stroke="#ccc" className="ml-[9px]"><path d="M1 13A12 12 0 0 1 14 1M4 13A9 9 0 0 1 14 4M7 13a6 6 0 0 1 7-6M10 13a3 3 0 0 1 4-3" /></svg>
      <svg width="22" height="14" viewBox="0 0 22 14" fill="none" stroke="#eee" className="ml-[7px]"><path d="M.500.500h21v13H.500z" /><path d="M3 4h16M3 7h16M6 10.500h10" strokeDasharray="1 1" /></svg>
      <span className="ml-[10px] w-[24px]">ENG</span>
      <div className="ml-[9px] w-[64px] flex flex-col items-center leading-[18px] text-[12.500px]">
        <span>17:02</span>
        <span>28-08-2021</span>
      </div>
      <svg width="16" height="16" viewBox="0 0 16 16" className="ml-[17px] mr-[25px]"><path d="M0 0h16v12H9.500L6.500 15v-3H0z" fill="#fff" /><path d="M3 3h10M3 6h10M3 9h7" stroke="#222" /></svg>
    </div>
  </div>
);

export default function App() {
  return (
    <div className="w-[1920px] h-[1080px] flex flex-col overflow-hidden font-[Roboto,sans-serif] bg-white">
      <TitleBar />
      <Ribbon />
      <FormulaBar />
      <Sheet />
      <SheetTabs />
      <StatusBar />
      <Taskbar />
    </div>
  );
}
